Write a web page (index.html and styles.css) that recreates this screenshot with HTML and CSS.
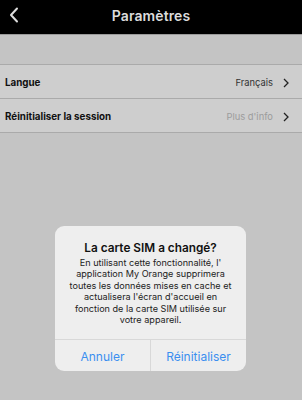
FILE: index.html
```html
<!DOCTYPE html>
<html lang="fr">
<head>
<meta charset="utf-8">
<link rel="stylesheet" href="styles.css">
</head>
<body>
<div class="screen">
  <header class="topbar">
    <svg class="back" width="10" height="16" viewBox="0 0 10 16"><path d="M8 1.5 L2 8 L8 14.5" fill="none" stroke="#dcdcdc" stroke-width="2" stroke-linecap="round" stroke-linejoin="round"/></svg>
    <h1 class="title">Paramètres</h1>
  </header>
  <div class="spacer"></div>
  <div class="list">
    <div class="row">
      <span class="label">Langue</span>
      <span class="value">Français</span>
      <svg class="chev" width="6" height="10" viewBox="0 0 6 10"><path d="M1 1 L5 5 L1 9" fill="none" stroke="#222" stroke-width="1.3"/></svg>
    </div>
    <div class="row">
      <span class="label">Réinitialiser la session</span>
      <span class="value light">Plus d'info</span>
      <svg class="chev" width="6" height="10" viewBox="0 0 6 10"><path d="M1 1 L5 5 L1 9" fill="none" stroke="#222" stroke-width="1.3"/></svg>
    </div>
  </div>
  <div class="dialog">
    <div class="dbody">
      <h2 class="dtitle">La carte SIM a changé?</h2>
      <p class="dtext">En utilisant cette fonctionnalité, l' application My Orange supprimera toutes les données mises en cache et actualisera l'écran d'accueil en fonction de la carte SIM utilisée sur votre appareil.</p>
    </div>
    <div class="dactions">
      <button class="dbtn">Annuler</button>
      <button class="dbtn">Réinitialiser</button>
    </div>
  </div>
</div>
</body>
</html>
```
FILE: styles.css
```css
* { box-sizing: border-box; margin: 0; padding: 0; }
html, body { width: 302px; height: 400px; overflow: hidden; }
body { background: #c4c4c4; font-family: "Inter", "Liberation Sans", sans-serif; }
.screen { position: relative; width: 302px; height: 400px; }
.topbar {
  height: 35px; background: #000; display: flex; align-items: center;
  position: relative; border-bottom: 1px solid #9a9a9a;
}
.back { position: absolute; left: 9px; top: 7px; }
.title {
  flex: 1; text-align: center; color: #dcdcdc; font-size: 14px; font-weight: 600;
  letter-spacing: 0.1px; margin-top: -4px;
}
.spacer { height: 30px; border-bottom: 1px solid #aaaaaa; }
.row {
  height: 34px; background: #cecece; border-bottom: 1px solid #aaaaaa;
  display: flex; align-items: center; padding: 2px 13px 0 5px;
}
.label { flex: 1; font-size: 9.8px; font-weight: 700; color: #111; }
.value { font-size: 9.4px; color: #333; margin-right: 10px; }
.value.light { color: #9c9c9c; }
.chev { display: block; }
.dialog {
  position: absolute; left: 55px; top: 226px; width: 191px; height: 145px;
  background: #eeeeee; border-radius: 9px; display: flex; flex-direction: column;
  overflow: hidden;
}
.dbody { height: 114px; padding: 14px 13px 0; text-align: center; border-bottom: 1px solid #d8d8d8; }
.dtitle { font-size: 11.8px; font-weight: 600; color: #111; line-height: 16px; }
.dtext { font-size: 9.1px; color: #222; line-height: 11.4px; margin-top: 1px; }
.dactions { flex: 1; display: flex; }
.dbtn {
  flex: 1; background: none; border: none; font-family: inherit; font-size: 12px;
  color: #3b8ef0; padding-top: 1px;
}
.dbtn + .dbtn { border-left: 1px solid #d8d8d8; }
```
